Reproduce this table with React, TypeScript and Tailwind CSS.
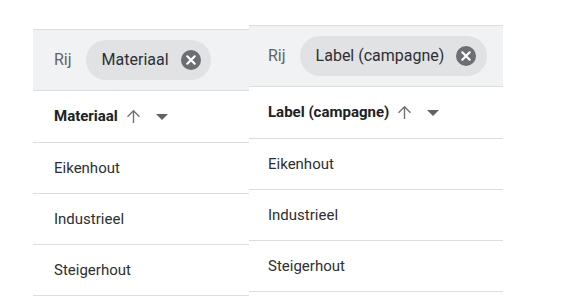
import React from "react";

function CloseIcon() {
  return (
    <svg width="20" height="20" viewBox="0 0 20 20" className="shrink-0">
      <circle cx="10" cy="10" r="10" fill="#6b6e72" />
      <path d="M6.3 6.3 L13.7 13.7 M13.7 6.3 L6.3 13.7" stroke="#ffffff" strokeWidth="2.2" strokeLinecap="round" />
    </svg>
  );
}

function ArrowUp() {
  return (
    <svg width="15" height="15" viewBox="0 0 15 15" className="shrink-0">
      <path d="M7.5 14 V1.8 M1.5 7.8 L7.5 1.8 L13.5 7.8" stroke="#6f7276" strokeWidth="1.4" fill="none" />
    </svg>
  );
}

function Caret() {
  return (
    <svg width="12" height="6" viewBox="0 0 12 6" className="shrink-0">
      <path d="M0 0 H12 L6 6 Z" fill="#5f6368" />
    </svg>
  );
}

function Panel({
  width,
  pad,
  label,
  chipPad,
  top,
}: {
  width: string;
  pad: string;
  label: string;
  chipPad: string;
  top: string;
}) {
  const rows = ["Eikenhout", "Industrieel", "Steigerhout"];
  return (
    <div className={`${width} ${top} flex flex-col`}>
      <div className={`h-[62px] box-border border-y border-[#dcdde0] bg-[#f1f2f3] flex items-center ${pad}`}>
        <span className="text-[16px] text-[#5f6368] leading-none">Rij</span>
        <div className={`ml-[14px] h-[40px] rounded-full bg-[#e1e2e4] flex items-center pl-[16px] ${chipPad}`}>
          <span className="text-[16px] text-[#2d2f32] leading-none whitespace-nowrap">{label}</span>
          <span className="ml-[12px] flex">
            <CloseIcon />
          </span>
        </div>
      </div>
      <div className={`h-[52px] box-border border-b border-[#dcdde0] flex items-center ${pad}`}>
        <span className="text-[15px] font-bold text-[#202124] leading-none whitespace-nowrap">{label}</span>
        <span className="ml-[8px] flex">
          <ArrowUp />
        </span>
        <span className="ml-[15px] flex">
          <Caret />
        </span>
      </div>
      {rows.map((r) => (
        <div key={r} className={`h-[51px] box-border border-b border-[#dcdde0] flex items-center ${pad}`}>
          <span className="text-[15px] text-[#2d2f32] leading-none">{r}</span>
        </div>
      ))}
    </div>
  );
}

export default function App() {
  return (
    <div
      className="w-[569px] h-[305px] bg-white flex items-start pl-[33px] overflow-hidden"
      style={{ fontFamily: "Roboto, 'Liberation Sans', sans-serif" }}
    >
      <Panel width="w-[216px]" top="mt-[29px]" pad="pl-[21px]" label="Materiaal" chipPad="pr-[10px]" />
      <Panel width="w-[254px]" top="mt-[25px]" pad="pl-[19px]" label="Label (campagne)" chipPad="pr-[11px]" />
    </div>
  );
}
